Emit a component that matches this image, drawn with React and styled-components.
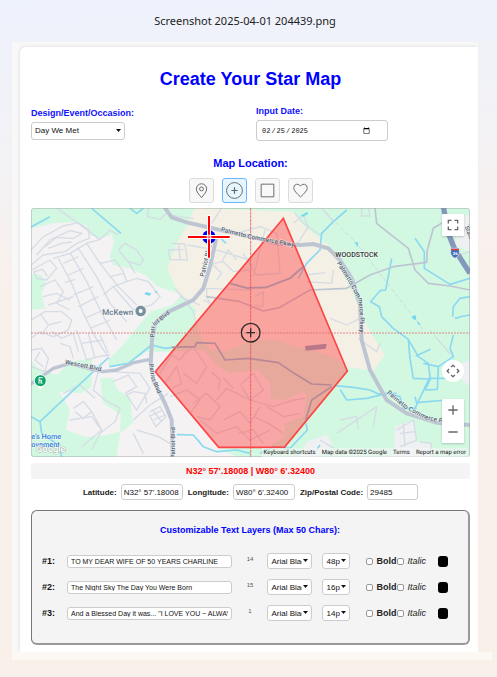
import React, { useState } from "react";
import styled, { createGlobalStyle } from "styled-components";

const GlobalStyle = createGlobalStyle`
  * { box-sizing: border-box; }
  body {
    margin: 0;
    min-height: 100vh;
    font-family: "Liberation Sans", Arial, sans-serif;
    color: #222;
    background: linear-gradient(176deg, #eef2fc 0%, #f2f2f6 20%, #f9f0eb 42%, #f9f0ea 100%);
  }
`;

const Page = styled.div`
  padding: 12px 5px 18px 12px;
`;

const FileName = styled.p`
  margin: 0 14px 13px 0;
  font: 11px/17px "Noto Sans", "Open Sans", sans-serif;
  text-align: center;
`;

const Frame = styled.div`
  margin-right: 14px;
  padding: 5px 0 0 8px;
  background: #f8f8f8;
`;

const FrameFoot = styled.div`
  height: 8px;
  background: #fcf8f4;
`;

const Card = styled.main`
  padding: 20px 8px 7px 11px;
  background: #fff;
  border-top-left-radius: 6px;
  box-shadow: -1px -1px 3px rgba(0, 0, 0, 0.08);
`;

const Title = styled.h1`
  margin: 0 0 15px;
  font-size: 18px;
  line-height: 24px;
  text-align: center;
  color: #0000ff;
`;

const Fields = styled.div`
  display: grid;
  grid-template-columns: 225fr 214fr;
  align-items: center;
  margin-bottom: 15px;
`;

const Field = styled.div`
  display: flex;
  flex-direction: column;
  align-items: flex-start;
  gap: 3px;
`;

const FieldLabel = styled.label`
  font-size: 9px;
  line-height: 11px;
  font-weight: bold;
  color: #1010ff;
`;

const SelectBox = styled.span`
  position: relative;
  display: flex;
  width: ${(p) => p.$width}px;
`;

const SelectControl = styled.select`
  appearance: none;
  width: 100%;
  height: ${(p) => (p.$tall ? 18 : 16)}px;
  padding: 0 9px 0 3px;
  border: 1px solid #ccc;
  border-radius: 3px;
  background: #fff;
  color: #111;
  font: 8px "Liberation Sans", Arial, sans-serif;
  overflow: hidden;
  white-space: nowrap;
`;

const Arrow = styled.svg`
  position: absolute;
  top: 50%;
  right: 4px;
  width: 5px;
  height: 3px;
  margin-top: -2px;
  pointer-events: none;
`;

const DateInput = styled.input`
  width: 132px;
  height: 21px;
  padding: 0 17px 0 4px;
  border: 1px solid #ccc;
  border-radius: 3px;
  background: #fff;
  color: #111;
  font: 7px "Liberation Mono", monospace;
  &::-webkit-calendar-picker-indicator {
    width: 7px;
    height: 7px;
    padding: 0;
  }
`;

const SectionTitle = styled.h2`
  margin: 0 0 8px;
  font-size: ${(p) => p.$size}px;
  line-height: 14px;
  text-align: center;
  color: #0000ff;
`;

const ShapeBar = styled.div`
  display: flex;
  justify-content: center;
  gap: 8px;
  margin-bottom: 5px;
`;

const ShapeButton = styled.button`
  display: grid;
  place-items: center;
  width: 25px;
  height: 25px;
  padding: 0;
  border: 1px solid ${(p) => (p.$active ? "#6bb5fa" : "#dcdcdc")};
  border-radius: 3px;
  background: ${(p) => (p.$active ? "#e6f6ff" : "#f8f8f8")};
  svg {
    width: 19px;
    height: 19px;
    fill: none;
    stroke: #666;
    stroke-width: 1.2;
  }
`;

const MapFrame = styled.div`
  position: relative;
  overflow: hidden;
  margin-bottom: 6px;
  border-radius: 3px;
`;

const MapSvg = styled.svg`
  display: block;
  width: 100%;
  height: auto;
  font-family: Roboto, sans-serif;
`;

const MapButton = styled.button`
  display: grid;
  place-items: center;
  width: 22px;
  height: 22px;
  padding: 0;
  border: 0;
  border-radius: ${(p) => (p.$round ? "50%" : "1px")};
  background: #fff;
  svg {
    width: 14px;
    height: 14px;
    fill: none;
    stroke: #666;
    stroke-width: 1.7;
  }
`;

const TopControls = styled.div`
  position: absolute;
  top: 6px;
  right: 6px;
  box-shadow: 0 1px 2px rgba(0, 0, 0, 0.2);
`;

const BottomControls = styled.div`
  position: absolute;
  right: 6px;
  bottom: 14px;
  display: grid;
  gap: 17px;
`;

const ZoomStack = styled.div`
  display: grid;
  box-shadow: 0 1px 2px rgba(0, 0, 0, 0.2);
`;

const Attribution = styled.div`
  position: absolute;
  right: 2px;
  bottom: 0;
  display: flex;
  gap: 6px;
  padding: 0 2px;
  background: rgba(245, 245, 245, 0.6);
  font: 6px/9px Roboto, sans-serif;
  text-rendering: geometricPrecision;
  color: #111;
  a { color: inherit; text-decoration: none; }
`;

const Readout = styled.output`
  display: block;
  margin-bottom: 5px;
  border-radius: 2px;
  background: #f4f4f4;
  font-size: 9px;
  line-height: 16px;
  font-weight: bold;
  text-align: center;
  color: #f00;
`;

const CoordRow = styled.div`
  display: flex;
  justify-content: center;
  gap: 5px;
  margin-bottom: 10px;
`;

const Coord = styled.label`
  display: flex;
  align-items: center;
  gap: 4px;
  font-size: 8px;
  font-weight: bold;
`;

const TextInput = styled.input`
  width: ${(p) => (p.$width ? `${p.$width}px` : "100%")};
  min-width: 0;
  height: ${(p) => (p.$width ? 16 : 13)}px;
  padding: ${(p) => (p.$width ? "0 2px" : "0 3px")};
  border: 1px solid #ccc;
  border-radius: 3px;
  background: #fff;
  color: #111;
  font: ${(p) => (p.$width ? 8 : 7)}px "Liberation Sans", Arial, sans-serif;
`;

const Layers = styled.section`
  padding: 12px 20px 22px 10px;
  border: 1px solid #777;
  border-right: 2px solid #999;
  border-bottom: 2px solid #999;
  border-radius: 6px;
  background: #f4f4f4;
`;

const LayerTitle = styled(SectionTitle)`
  margin: 0 -10px 16px 0;
`;

const LayerList = styled.div`
  display: grid;
  gap: 10px;
`;

const LayerRow = styled.div`
  display: grid;
  grid-template-columns: 25px minmax(0, 1fr) 35px 45px 38px auto 10px;
  align-items: center;
  height: 16px;
`;

const LayerLabel = styled.label`
  font-size: 9px;
  font-weight: bold;
  color: #111;
`;

const Count = styled.span`
  align-self: start;
  font-size: 6px;
  line-height: 12px;
  text-align: center;
  color: #555;
`;

const SizeCell = styled.div`
  display: flex;
  justify-content: flex-end;
`;

const Checks = styled.div`
  display: flex;
  align-items: center;
  gap: 1px;
  margin: 0 12px 0 16px;
`;

const Check = styled.label`
  display: flex;
  align-items: center;
  gap: 3px;
  font-size: 9px;
  line-height: 12px;
  font-weight: ${(p) => (p.$bold ? "bold" : "normal")};
  font-style: ${(p) => (p.$bold ? "normal" : "italic")};
`;

const CheckInput = styled.input`
  appearance: none;
  width: 7px;
  height: 7px;
  margin: 0;
  border: 1px solid #999;
  border-radius: 2px;
  background: #fff;
  &:checked { background: #1a73e8; }
`;

const Swatch = styled.input`
  appearance: none;
  width: 10px;
  height: 11px;
  padding: 0;
  border: 0;
  border-radius: 3px;
  overflow: hidden;
  background: #000;
  &::-webkit-color-swatch-wrapper { padding: 0; }
  &::-webkit-color-swatch { border: 0; }
`;

function Select({ id, label, width, tall, options }) {
  return (
    <SelectBox $width={width}>
      <SelectControl id={id} aria-label={label} $tall={tall}>
        {options.map((o) => <option key={o}>{o}</option>)}
      </SelectControl>
      <Arrow viewBox="0 0 5 3" aria-hidden="true"><path d="M0 0h5L2.500 3z" fill="#111" /></Arrow>
    </SelectBox>
  );
}

const SHAPES = [
  ["Pin", <><path d="M12 21c-3.500-4.300-6.500-7.500-6.500-11a6.500 6.500 0 0 1 13 0c0 3.500-3 6.700-6.500 11z" /><circle cx="12" cy="10" r="2.500" /></>],
  ["Circle", <><circle cx="12" cy="12" r="10" /><path d="M12 8v8M8 12h8" strokeWidth="1.500" /></>],
  ["Square", <path d="M4 4h16v16H4z" />],
  ["Heart", <path d="M12 20C7 15.500 3.500 12 3.500 8.500a4.500 4.500 0 0 1 8.500-2 4.500 4.500 0 0 1 8.500 2C20.500 12 17 15.500 12 20z" />],
];

const STREETS = [
  "M33 150 70 110 130 78 175 68 205 88 208 115 170 130 135 155 70 165 33 195",
  "M50 165 90 120 150 92 185 100 160 116 110 112 75 140M85 145 125 130 155 126",
  "M100 175 150 160 200 130 240 118M35 210 90 180 110 205 80 240 50 235 42 215 68 208 82 228",
  "M115 175 155 250 190 340 225 410 270 480M150 158 200 245 250 350 290 420",
  "M175 145 230 230 270 310 320 365M200 130 240 190 295 260 350 315",
  "M130 190 175 170M145 225 190 205M135 248 165 238M160 285 220 260M175 320 235 290M195 355 250 330M210 385 270 360",
  "M240 190 285 180 310 215 320 245 280 260 250 285M270 230 310 220M280 260 340 330 395 315 420 290 385 245 350 235 320 245",
  "M60 260 105 240 130 275 110 310 150 330M70 290 110 280 150 300M85 315 160 290",
  "M33 360 75 335 125 335 155 360 145 390 100 410 60 395 33 415M60 340 85 375 125 365M85 375 65 405",
  "M110 24 175 70 240 118 270 90 295 105M295 150 315 130 350 150 370 180 360 195 325 185 295 150M325 185 345 220",
  "M385 25 382 50 420 58 440 40 475 50 520 55M455 130 495 132 502 180 450 178 445 150 490 148M475 130 480 178M502 135 560 145",
  "M465 265 495 300 520 335 530 380M480 290 540 315M550 300 570 310 560 290 560 265 690 270M580 190 610 185 640 215 690 210M575 190 605 220 590 240",
  "M575 70 605 24M590 150 690 180M605 185 625 150 650 180",
  "M33 450 65 445 85 475 75 515 33 500M60 455 45 480 70 500M95 395 125 415 160 400 175 455M170 390 200 480 235 470 270 465",
  "M120 430 150 440 160 475M205 400 225 475M240 405 265 460M185 430 250 420",
  "M235 515 220 570 255 600 300 625 285 665 240 700 215 750M130 580 180 555 225 595M160 625 190 605 215 635 190 655 165 635M150 660 215 650 245 690 185 740M215 635 245 690",
  "M280 545 325 525 350 560 315 580M275 515 360 520 390 565 350 630 320 585 340 575 375 580 380 610M340 660 390 615 445 580M350 690 415 710 450 730M340 700 370 760",
  "M390 635 420 620 438 650 408 680 388 645M398 630 425 665M392 647 430 630M402 660 435 645",
  "M420 520 455 465 480 480 500 455M435 550 470 500 485 550 455 565M490 465 520 440 560 500 530 550 490 520M450 590 500 570 540 600 510 640",
  "M520 610 560 580 600 620 570 660 530 650M590 600 620 565 690 600M610 660 660 635 690 670 720 620M575 515 600 540 595 570M540 660 590 700 650 680 690 720 750 690",
  "M660 555 700 520 730 570 690 600 665 560M690 600 760 620 820 600 855 595M740 620 790 650 840 640M700 650 745 670 790 700M655 700 700 690 730 730M610 535 640 565",
  "M705 290 730 275 728 320 705 315M650 100 720 80 770 100 780 220 710 225 670 160M735 90 700 230M820 70 850 45 865 80 830 135 860 135",
  "M825 40 850 70 900 105 940 65 910 30M1025 24 1025 48 1050 48 1045 24M940 210 935 250 860 245M860 225 915 218M980 375 1020 355 1025 400M930 355 980 375",
  "M1080 430 1070 455 1035 430 1015 415M950 700 1070 620 1060 680M960 660 1010 650 1015 690M1130 690 1180 660 1190 720 1140 740M1140 700 1185 695M1150 670 1155 740M1250 415 1290 460",
  "M900 720 950 750 920 765M1200 725 1235 730 1230 765M1305 170 1350 155M1320 110 1350 70",
];

const WATER = [
  "M33 81 90 50M215 25 303 100M330 25 350 40 370 25M592 105 618 130",
  "M980 30 940 65 905 100 900 150 860 190 835 235M1185 115 1213 155 1213 205 1290 253 1350 235",
  "M1115 175 1097 270 1080 272 1052 305 1078 320 1085 350 1120 385 1165 418 1170 475 1180 535 1225 537",
  "M1350 290 1320 295 1300 320 1298 350M1350 345 1330 348 1305 355M1165 418 1195 470 1225 490 1230 530 1185 625M1187 468 1232 448M1210 490 1255 500 1252 568 1215 570M1300 405 1290 445 1300 470 1255 500M1215 570 1232 535 1280 535",
  "M33 650 60 665 150 580 264 474M60 665 65 700 115 735 125 770M268 500 325 490 395 435 435 445 455 442",
  "M945 557 1000 562 1050 570 1075 582 1130 580M960 568 980 600 1040 595 1100 580 1140 590 1150 625 1190 625M1185 590 1190 608 1280 600",
  "M470 704 520 705 550 740 590 755 650 750 690 760M858 670 862 690 810 745 760 740 720 760M900 735 890 750",
];

const MAJOR = [
  ["M431 18 455 52 500 67 600 90 700 112 770 130 840 135 880 132 925 145 960 180 995 235 1020 315 1025 420 1050 510 1100 600 1160 640 1250 668 1350 675", 12],
  ["M590 110 570 200 550 265 520 300 440 338 405 370 396 420 392 490 400 540 435 610 455 660 458 771", 12],
  ["M33 552 100 505 150 490 210 507 250 515 290 510 340 488 392 478", 10],
  ["M1065 24 1070 70 1120 110 1165 145 1185 210 1225 250 1290 258 1350 270", 5],
  ["M630 250 680 264 740 262 810 235 850 200M560 290 660 305 730 333 780 322 870 270 980 265 1050 225 1120 200 1220 187 1222 150 1240 85 1265 70", 5],
];

function StreetMap() {
  return (
    <MapSvg viewBox="33 24 1317 747" role="img" aria-label="Map centered on the selected location">
      <defs>
        <path id="pk1" d="M602 94 690 116 850 146" />
        <path id="pk2" d="M950 190 985 245 1015 300 1020 350 1018 450" />
        <path id="pk3" d="M1100 580 1155 626 1215 657 1350 688" />
        <path id="pb1" d="M552 231 578 120" />
        <path id="pb2" d="M403 412 404 378 480 318" />
        <path id="pb3" d="M387 492 395 540 430 620" />
        <path id="wb" d="M134 492 180 500 280 522" />
      </defs>
      <path fill="#d3f8e2" d="M33 24h1317v747H33z" />
      <path fill="#f4f2f3" d="M33 85 100 70 170 66 200 76 212 105 240 118 275 103 282 125 270 170 278 195 330 205 375 225 410 258 480 282 475 310 400 332 398 350 400 455 430 455 430 520 600 742 600 771H33z" />
      <path fill="#f4f2f3" d="M390 490 435 455 550 450 590 495 625 518 715 510 750 550 753 598 795 600 845 575 860 585 850 650 795 670 795 710 745 742 600 745 650 771H400z" />
      <path fill="#f5f0e5" d="M525 24 505 70 470 130 442 205 470 270 530 330 520 360 550 420 565 445 615 455 695 422 775 420 825 440 895 455 955 480 975 500 1060 512 1095 465 1050 395 1020 330 980 245 930 140 850 75 818 35z" />
      <path fill="#d3f8e2" d="M33 220 65 225 78 250 65 280 75 325 33 330zM325 415 350 385 395 330 440 335 480 290 530 330 520 360 530 400 480 450 420 455 380 455 330 490 268 500 265 480 300 445zM33 480 60 510 110 525 150 485 215 475 215 560 185 580 118 575 150 630 138 690 200 712 260 705 300 695 302 645 250 610 240 535 280 535 292 570 330 590 338 670 300 700 290 771H33z" />
      <path fill="#eef0f1" d="M860 725 920 705 940 735 890 771H840zM1125 680 1180 660 1188 725 1235 735 1230 771H1120zM1310 495 1350 480V560L1320 535zM1305 135 1320 60 1350 40V155z" />
      <g fill="none" stroke="#d5dce5" strokeWidth="4">{STREETS.map((d) => <path key={d} d={d} />)}</g>
      <path fill="none" stroke="#d0d9df" strokeWidth="3" strokeDasharray="14 6" d="M905 25 1010 130 1110 260 1210 390M1230 390 1330 510" />
      <g fill="none" stroke="#8bd9f0" strokeWidth="5" strokeLinejoin="round">{WATER.map((d) => <path key={d} d={d} />)}</g>
      <path fill="#75d8ee" d="m372 282 8-6 15 5-8 6zM403 275l9-3-2 8zM842 47l20-12 2 7-16 8zM1003 125l12 3-2 14zM1175 350l12-5 2 15-10-2zM1190 362l12 10-6 4z" />
      <g fill="none" stroke="#bdc5d3" strokeLinejoin="round" strokeLinecap="round">
        {MAJOR.map(([d, w]) => <path key={d} d={d} strokeWidth={w} />)}
      </g>
      <path fill="#ff4040" fillOpacity="0.43" stroke="#fc4545" strokeWidth="5" d="M790 55 982 513 793 742H596L406 515z" />
      <path fill="none" stroke="#b98897" strokeWidth="5" strokeLinejoin="round" d="M455 442 525 440 530 428 585 430 615 480 685 475 775 488 815 515 875 552 935 555M935 560 875 600 857 660M630 250 680 264 740 262 810 235 850 200" />
      <path fill="#b9788a" d="M855 438l65-7-3 15-60 6z" />
      <path fill="none" stroke="#ee4a4a" strokeOpacity="0.75" strokeWidth="3" strokeDasharray="9 2" d="M692 24V771" />
      <path fill="none" stroke="#dd7070" strokeOpacity="0.8" strokeWidth="3" strokeDasharray="6 3" d="M33 399H1350" />
      <g fill="none" stroke="#332b2b" strokeWidth="4"><circle cx="692" cy="398" r="28" /><path d="M692 385v26M679 398h26" /></g>
      <g fill="#53616f" stroke="#fff" strokeWidth="4" strokeOpacity="0.5" paintOrder="stroke" fontSize="19" fontWeight="500" textRendering="geometricPrecision">
        <text><textPath href="#pk1">Palmetto Commerce Pkwy</textPath></text>
        <text><textPath href="#pk2">Palmetto Commerce Pkwy</textPath></text>
        <text><textPath href="#pk3">Palmetto Commerce Pkwy</textPath></text>
        <text><textPath href="#pb1">Patriot Blvd</textPath></text>
        <text fontSize="18"><textPath href="#pb2">Patriot Blvd</textPath></text>
        <text fontSize="18"><textPath href="#pb3">Patriot Blvd</textPath></text>
        <text transform="translate(464 775) rotate(-90)" fontSize="18">Patriot Blvd</text>
        <text><textPath href="#wb">Wescott Blvd</textPath></text>
        <text x="247" y="345" fontSize="24" fill="#66798a">McKewn</text>
        <text x="946" y="170" fontSize="21" fill="#333">WOODSTOCK</text>
        <text x="1334" y="80" fontSize="18" transform="rotate(70 1334 80)">State</text>
        <text fontSize="22" fill="#337ddd"><tspan x="34" y="718">e’s Home</tspan><tspan x="34" y="742">ovement</tspan></text>
        <text x="48" y="756" fontSize="28" fill="#fff" stroke="#777" strokeWidth="3">Google</text>
      </g>
      <g><path d="M350 344l12 14 12-14z" fill="#fff" /><circle cx="362" cy="333" r="17" fill="#78909c" stroke="#fff" strokeWidth="2" /><circle cx="362" cy="333" r="6" fill="#fff" /></g>
      <g><path d="M50 556l11 14 11-14z" fill="#fff" /><circle cx="61" cy="542" r="18" fill="#10a46b" stroke="#fff" strokeWidth="3" /><path d="M57 551v-18h11M57 541h8l-3 8h6" fill="none" stroke="#fff" strokeWidth="3" /></g>
      <path fill="none" stroke="#8398bb" strokeWidth="16" d="M1270 20 1285 100 1305 150 1350 220" />
      <g><path d="M1292 145h26v16q-3 10-13 14-10-4-13-14z" fill="#416fb5" stroke="#fff" strokeWidth="2" /><path d="M1293 146h24v5h-24z" fill="#d44" /><text x="1298" y="165" fontSize="13" fill="#fff" fontWeight="700">26</text></g>
      <circle cx="567" cy="111" r="20" fill="#0000ee" />
      <path d="M567 46v129M502 111h129" stroke="#fff" strokeWidth="12" />
      <path d="M567 48v125M504 111h125" stroke="#f00" strokeWidth="6" />
      <path d="M560 111h14M567 104v14" stroke="#fff" strokeWidth="7" />
      <path d="M562 111h10M567 106v10" stroke="#f00" strokeWidth="2" />
      <rect x="34" y="25" width="1315" height="745" rx="8" fill="none" stroke="#888" strokeOpacity="0.4" strokeWidth="3" />
    </MapSvg>
  );
}

const LAYERS = [
  { text: "TO MY DEAR WIFE OF 50 YEARS CHARLINE", count: 14, size: "48px" },
  { text: "The Night Sky The Day You Were Born", count: 15, size: "16px" },
  { text: "And a Blessed Day it was... \"I LOVE YOU ~ ALWAYS\"", count: 1, size: "14px" },
];

function Layer({ index, text, count, size }) {
  const id = `layer-${index}`;
  return (
    <LayerRow>
      <LayerLabel htmlFor={id}>#{index}:</LayerLabel>
      <TextInput id={id} defaultValue={text} maxLength={50} />
      <Count>{count}</Count>
      <Select label={`Font for layer ${index}`} width={45} options={["Arial Black", "Georgia"]} />
      <SizeCell><Select label={`Size for layer ${index}`} width={28} options={[size, "24px"]} /></SizeCell>
      <Checks>
        <Check $bold><CheckInput type="checkbox" />Bold</Check>
        <Check><CheckInput type="checkbox" />Italic</Check>
      </Checks>
      <Swatch type="color" defaultValue="#000000" aria-label={`Color for layer ${index}`} />
    </LayerRow>
  );
}

export default function App() {
  const [shape, setShape] = useState("Circle");
  return (
    <>
      <GlobalStyle />
      <Page>
        <FileName>Screenshot 2025-04-01 204439.png</FileName>
        <Frame>
          <Card>
            <Title>Create Your Star Map</Title>
            <Fields>
              <Field>
                <FieldLabel htmlFor="occasion">Design/Event/Occasion:</FieldLabel>
                <Select id="occasion" width={94} tall options={["Day We Met", "Anniversary"]} />
              </Field>
              <Field>
                <FieldLabel htmlFor="date">Input Date:</FieldLabel>
                <DateInput id="date" type="date" defaultValue="2025-02-25" />
              </Field>
            </Fields>
            <SectionTitle $size={11}>Map Location:</SectionTitle>
            <ShapeBar>
              {SHAPES.map(([name, icon]) => (
                <ShapeButton key={name} type="button" aria-label={name} aria-pressed={shape === name} $active={shape === name} onClick={() => setShape(name)}>
                  <svg viewBox="0 0 24 24">{icon}</svg>
                </ShapeButton>
              ))}
            </ShapeBar>
            <MapFrame>
              <StreetMap />
              <TopControls>
                <MapButton type="button" aria-label="Fullscreen">
                  <svg viewBox="0 0 18 18"><path d="M3 7V3h4M11 3h4v4M15 11v4h-4M7 15H3v-4" /></svg>
                </MapButton>
              </TopControls>
              <BottomControls>
                <MapButton type="button" $round aria-label="Map camera controls">
                  <svg viewBox="0 0 18 18"><path d="M6.500 4 9 1.500 11.500 4M14 6.500 16.500 9 14 11.500M11.500 14 9 16.500 6.500 14M4 11.500 1.500 9 4 6.500" /></svg>
                </MapButton>
                <ZoomStack>
                  <MapButton type="button" aria-label="Zoom in"><svg viewBox="0 0 18 18"><path d="M9 3v12M3 9h12" /></svg></MapButton>
                  <MapButton type="button" aria-label="Zoom out"><svg viewBox="0 0 18 18"><path d="M3 9h12" /></svg></MapButton>
                </ZoomStack>
              </BottomControls>
              <Attribution>
                <span>Keyboard shortcuts</span>
                <span>Map data ©2025 Google</span>
                <a href="#terms">Terms</a>
                <a href="#report">Report a map error</a>
              </Attribution>
            </MapFrame>
            <Readout>N32° 57'.18008 | W80° 6'.32400</Readout>
            <CoordRow>
              <Coord>Latitude:<TextInput $width={62} defaultValue="N32° 57'.18008" /></Coord>
              <Coord>Longitude:<TextInput $width={62} defaultValue="W80° 6'.32400" /></Coord>
              <Coord>Zip/Postal Code:<TextInput $width={51} defaultValue="29485" /></Coord>
            </CoordRow>
            <Layers>
              <LayerTitle $size={9}>Customizable Text Layers (Max 50 Chars):</LayerTitle>
              <LayerList>
                {LAYERS.map((layer, i) => <Layer key={layer.size} index={i + 1} {...layer} />)}
              </LayerList>
            </Layers>
          </Card>
        </Frame>
        <FrameFoot />
      </Page>
    </>
  );
}
